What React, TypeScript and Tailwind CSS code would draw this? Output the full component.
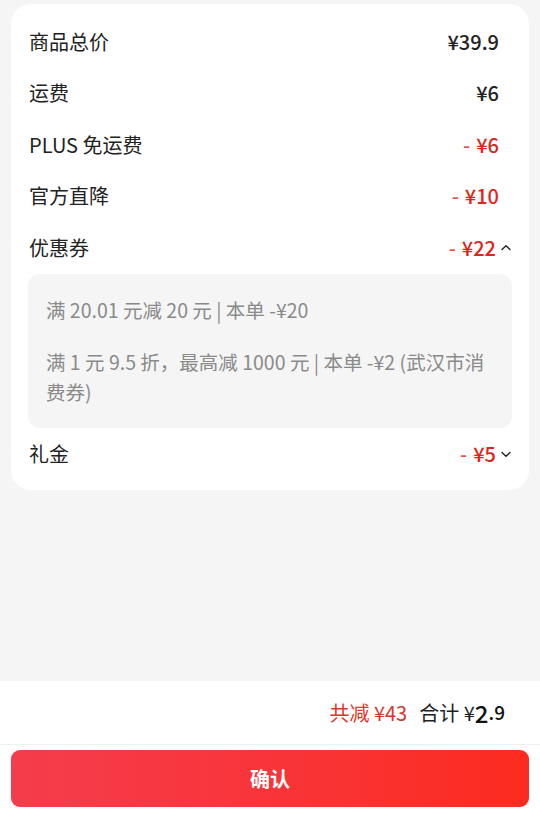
import React from "react";

const font = { fontFamily: '"Noto Sans CJK SC", "Noto Sans", sans-serif' };

function Chevron({ up }: { up?: boolean }) {
  return (
    <svg width="12" height="12" viewBox="0 0 12 12" className="ml-[4px]">
      <path
        d={up ? "M2 7.5 L6 3.8 L10 7.5" : "M2 4.5 L6 8.2 L10 4.5"}
        fill="none"
        stroke="#222"
        strokeWidth="1.4"
        strokeLinecap="round"
        strokeLinejoin="round"
      />
    </svg>
  );
}

function Row({ label, value, red }: { label: string; value: string; red?: boolean }) {
  return (
    <div className="flex h-[51.5px] items-center justify-between pl-[18px] pr-[30px]">
      <span className="text-[20px] text-[#222]">{label}</span>
      {red ? (
        <span className="text-[20px] font-medium text-[#e0241b]">
          <span className="mr-[6px] text-[#e0553f]">-</span>
          {value}
        </span>
      ) : (
        <span className="text-[20px] font-medium text-[#222]">{value}</span>
      )}
    </div>
  );
}

export default function App() {
  return (
    <div style={font} className="flex h-[819px] w-[540px] flex-col bg-[#f5f5f5]">
      <div className="flex-1 px-[11px] pt-[4px]">
        <div className="rounded-[20px] bg-white pb-[10px] pt-[12px]">
          <Row label="商品总价" value="¥39.9" />
          <Row label="运费" value="¥6" />
          <Row label="PLUS 免运费" value="¥6" red />
          <Row label="官方直降" value="¥10" red />
          <div className="flex h-[51.5px] items-center justify-between pl-[18px] pr-[30px]">
            <span className="text-[20px] text-[#222]">优惠券</span>
            <div className="mr-[-13px] flex items-center">
              <span className="text-[20px] font-medium text-[#e0241b]">
                <span className="mr-[6px] text-[#e0553f]">-</span>¥22
              </span>
              <Chevron up />
            </div>
          </div>
          <div className="mx-[17px] rounded-[12px] bg-[#f5f5f5] pl-[18px] pr-[14px] pb-[21px] pt-[21px] text-[19.5px] leading-[30px] text-[#8a8a8a]">
            <p>满 20.01 元减 20 元 | 本单 -¥20</p>
            <p className="mt-[22px]">满 1 元 9.5 折，最高减 1000 元 | 本单 -¥2 (武汉市消费券)</p>
          </div>
          <div className="flex h-[52px] items-center justify-between pl-[18px] pr-[30px]">
            <span className="text-[20px] text-[#222]">礼金</span>
            <div className="mr-[-13px] flex items-center">
              <span className="text-[20px] font-medium text-[#e0241b]">
                <span className="mr-[6px] text-[#e0553f]">-</span>¥5
              </span>
              <Chevron />
            </div>
          </div>
        </div>
      </div>
      <div className="bg-white">
        <div className="flex h-[63px] items-center justify-end pr-[35px]">
          <span className="text-[20px] text-[#d9372b]">共减 ¥43</span>
          <span className="ml-[12px] text-[20px] text-[#222]">合计 ¥</span>
          <span className="text-[24px] font-medium text-[#111]">2</span>
          <span className="text-[19px] font-medium text-[#111]">.9</span>
        </div>
        <div className="h-px bg-[#f0f0f0]" />
        <div className="px-[11px] pb-[12px] pt-[5px]">
          <button className="flex h-[57px] w-full items-center justify-center rounded-[9px] bg-gradient-to-r from-[#f53c4c] to-[#fc2b1d] text-[20px] font-bold text-white">
            确认
          </button>
        </div>
      </div>
    </div>
  );
}
